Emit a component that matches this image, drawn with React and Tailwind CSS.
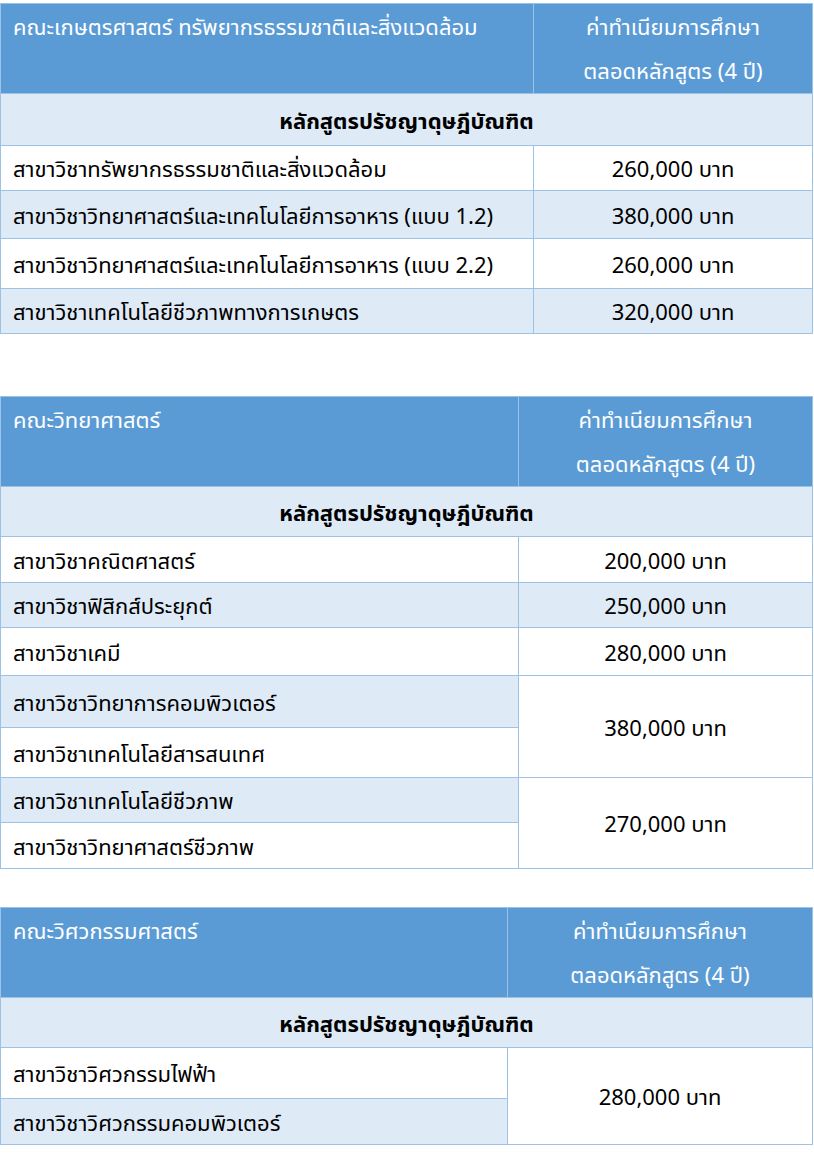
import React from 'react';

const tables = [
  {
    faculty: 'คณะเกษตรศาสตร์ ทรัพยากรธรรมชาติและสิ่งแวดล้อม',
    left: 'w-[533px]',
    wrap: 'mt-[3px]',
    sub: 'h-[52px]',
    rows: [
      { items: [{ name: 'สาขาวิชาทรัพยากรธรรมชาติและสิ่งแวดล้อม', h: 'h-[45px]' }], price: '260,000 บาท', shade: false },
      { items: [{ name: 'สาขาวิชาวิทยาศาสตร์และเทคโนโลยีการอาหาร (แบบ 1.2)', h: 'h-[48px]' }], price: '380,000 บาท', shade: true },
      { items: [{ name: 'สาขาวิชาวิทยาศาสตร์และเทคโนโลยีการอาหาร (แบบ 2.2)', h: 'h-[50px]' }], price: '260,000 บาท', shade: false },
      { items: [{ name: 'สาขาวิชาเทคโนโลยีชีวภาพทางการเกษตร', h: 'h-[45px]' }], price: '320,000 บาท', shade: true },
    ],
  },
  {
    faculty: 'คณะวิทยาศาสตร์',
    left: 'w-[518px]',
    wrap: 'mt-[62px]',
    sub: 'h-[50px]',
    rows: [
      { items: [{ name: 'สาขาวิชาคณิตศาสตร์', h: 'h-[46px]' }], price: '200,000 บาท', shade: false },
      { items: [{ name: 'สาขาวิชาฟิสิกส์ประยุกต์', h: 'h-[45px]' }], price: '250,000 บาท', shade: true },
      { items: [{ name: 'สาขาวิชาเคมี', h: 'h-[48px]' }], price: '280,000 บาท', shade: false },
      {
        items: [
          { name: 'สาขาวิชาวิทยาการคอมพิวเตอร์', h: 'h-[52px]', shade: true },
          { name: 'สาขาวิชาเทคโนโลยีสารสนเทศ', h: 'h-[50px]', shade: false },
        ],
        price: '380,000 บาท',
      },
      {
        items: [
          { name: 'สาขาวิชาเทคโนโลยีชีวภาพ', h: 'h-[45px]', shade: true },
          { name: 'สาขาวิชาวิทยาศาสตร์ชีวภาพ', h: 'h-[46px]', shade: false },
        ],
        price: '270,000 บาท',
      },
    ],
  },
  {
    faculty: 'คณะวิศวกรรมศาสตร์',
    left: 'w-[507px]',
    wrap: 'mt-[38px]',
    sub: 'h-[50px]',
    rows: [
      {
        items: [
          { name: 'สาขาวิชาวิศวกรรมไฟฟ้า', h: 'h-[51px]', shade: false },
          { name: 'สาขาวิชาวิศวกรรมคอมพิวเตอร์', h: 'h-[46px]', shade: true },
        ],
        price: '280,000 บาท',
      },
    ],
  },
];

const cell = 'border border-[#9CC2E5] p-0';

const FeeTable = ({ t }) => (
  <table className={`${t.wrap} w-[813px] border-collapse table-fixed`}>
    <colgroup>
      <col className={t.left} />
      <col />
    </colgroup>
    <tbody>
      <tr className="h-[90px] bg-[#5B9BD5] text-white">
        <td className={`${cell} align-top pl-3 leading-[44px]`}>{t.faculty}</td>
        <td className={`${cell} align-top text-center leading-[44px]`}>
          ค่าทำเนียมการศึกษา
          <br />
          ตลอดหลักสูตร (4 ปี)
        </td>
      </tr>
      <tr className={`${t.sub} bg-[#DEEAF6]`}>
        <td colSpan={2} className={`${cell} text-center font-bold leading-[30px]`}>
          หลักสูตรปรัชญาดุษฎีบัณฑิต
        </td>
      </tr>
      {t.rows.map((row, i) =>
        row.items.map((item, j) => {
          const shaded = item.shade ?? row.shade;
          return (
            <tr key={`${i}-${j}`} className={item.h}>
              <td className={`${cell} pl-3 leading-[30px] ${shaded ? 'bg-[#DEEAF6]' : 'bg-white'}`}>{item.name}</td>
              {j === 0 && (
                <td
                  rowSpan={row.items.length}
                  className={`${cell} text-center leading-[30px] ${row.items.length === 1 && row.shade ? 'bg-[#DEEAF6]' : 'bg-white'}`}
                >
                  {row.price}
                </td>
              )}
            </tr>
          );
        })
      )}
    </tbody>
  </table>
);

export default function App() {
  return (
    <div className="w-[814px] min-h-[1167px] overflow-hidden bg-white text-[22px] text-black font-['Noto_Sans','Noto_Sans_Thai','Tahoma',sans-serif]">
      {tables.map((t) => (
        <FeeTable key={t.faculty} t={t} />
      ))}
    </div>
  );
}
